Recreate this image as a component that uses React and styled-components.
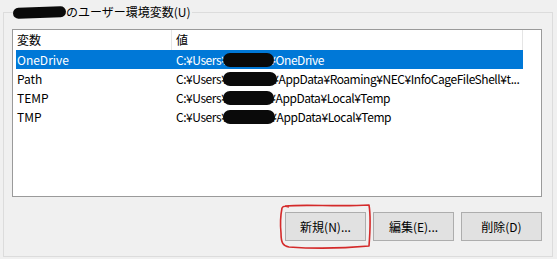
import React from "react";
import styled, { createGlobalStyle } from "styled-components";

const Global = createGlobalStyle`
  html, body { margin: 0; padding: 0; background: #f0f0f0; }
  body { font-family: "Noto Sans CJK JP", "Noto Sans", sans-serif; font-size: 12px; color: #000; }
`;

const Page = styled.div`
  width: 557px;
  height: 259px;
  padding: 4px 4px 0 3px;
  box-sizing: border-box;
`;

const Group = styled.fieldset`
  margin: 0;
  padding: 9px 10px 14px 8px;
  border: 1px solid #dcdcdc;
  height: 253px;
  box-sizing: border-box;
  display: flex;
  flex-direction: column;
  min-width: 0;
`;

const Legend = styled.legend`
  padding: 0 1px 0 0;
  margin-left: 1px;
  line-height: 16px;
  font-size: 12px;
  display: flex;
  align-items: center;
`;

const Redact = styled.span`
  display: inline-block;
  flex: 0 0 auto;
  width: ${(p) => p.$w}px;
  height: ${(p) => p.$h || 13}px;
  background: #0a0a0a;
  border-radius: ${(p) => (p.$h || 13) / 2}px;
  margin-left: ${(p) => p.$ml || 0}px;
  margin-right: ${(p) => p.$mr || 0}px;
  vertical-align: middle;
  position: relative;
  z-index: 1;
  transform: rotate(${(p) => p.$rot || 0}deg);
`;

const ListBox = styled.div`
  border: 1px solid #9a9a9a;
  background: #fff;
  height: 168px;
  flex: 0 0 auto;
  box-sizing: border-box;
  padding: 0 18px 0 3px;
`;

const Header = styled.div`
  display: grid;
  grid-template-columns: 156px 1fr;
  height: 20px;
  align-items: center;
`;

const HeadCell = styled.div`
  height: 20px;
  line-height: 20px;
  padding-left: ${(p) => (p.$first ? 1 : 4)}px;
  border-right: 1px solid #e5e5e5;
`;

const Row = styled.div`
  display: grid;
  grid-template-columns: 156px 1fr;
  height: 19px;
  line-height: 19px;
  background: ${(p) => (p.$sel ? "#0078d7" : "transparent")};
  color: ${(p) => (p.$sel ? "#fff" : "#000")};
  white-space: nowrap;
`;

const Cell = styled.div`
  padding-left: ${(p) => (p.$first ? 1 : 4)}px;
  overflow: hidden;
  display: flex;
  align-items: center;
  min-width: 0;
  letter-spacing: ${(p) => (p.$first ? "0" : "-0.45px")};
`;

const Buttons = styled.div`
  margin-top: 15px;
  display: flex;
  justify-content: flex-end;
  gap: 7px;
  position: relative;
`;

const Button = styled.button`
  width: 81px;
  height: 29px;
  background: #e1e1e1;
  border: 1px solid #adadad;
  font-family: "Noto Sans CJK JP", "Noto Sans", sans-serif;
  font-size: 12px;
  color: #000;
  padding: 0;
`;

const Marker = styled.svg`
  position: absolute;
  left: 265px;
  top: -9px;
  overflow: visible;
  pointer-events: none;
`;

const rows = [
  { name: "OneDrive", tail: "¥OneDrive", sel: true, w: 51 },
  { name: "Path", tail: "¥AppData¥Roaming¥NEC¥InfoCageFileShell¥t...", w: 54 },
  { name: "TEMP", tail: "¥AppData¥Local¥Temp", w: 51 },
  { name: "TMP", tail: "¥AppData¥Local¥Temp", w: 52 },
];

export default function App() {
  return (
    <>
      <Global />
      <Page>
        <Group>
          <Legend>
            <Redact $w={53} $h={11} $rot={-2} />
            のユーザー環境変数(U)
          </Legend>
          <ListBox>
            <Header>
              <HeadCell $first>変数</HeadCell>
              <HeadCell>値</HeadCell>
            </Header>
            {rows.map((r) => (
              <Row key={r.name} $sel={r.sel}>
                <Cell $first>{r.name}</Cell>
                <Cell>
                  C:¥Users¥
                  <Redact $w={r.w} $h={14} $ml={-4} $mr={-5} />
                  {r.tail}
                </Cell>
              </Row>
            ))}
          </ListBox>
          <Buttons>
            <Button>新規(N)...</Button>
            <Button>編集(E)...</Button>
            <Button>削除(D)</Button>
            <Marker width="96" height="46">
              <path
                d="M8 3 C30 1, 60 4, 92 2 C94 14, 93 30, 92 43 C70 45, 40 46, 12 44 C6 43, 4 40, 4 30 C3 20, 4 10, 5 5 C6 3, 9 3, 12 4"
                fill="none"
                stroke="#d42a2a"
                strokeWidth="1.6"
                strokeLinejoin="round"
              />
            </Marker>
          </Buttons>
        </Group>
      </Page>
    </>
  );
}
